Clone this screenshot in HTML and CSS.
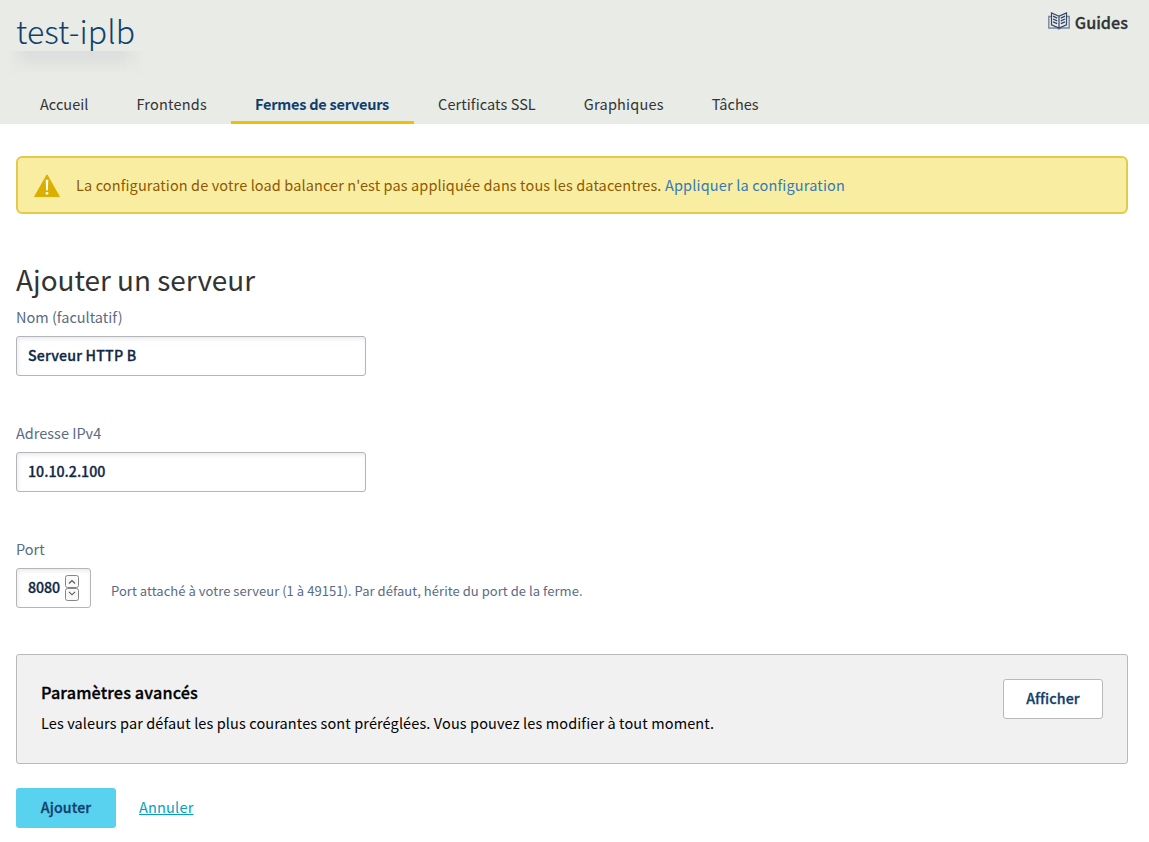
FILE: index.html
```html
<!DOCTYPE html>
<html lang="fr">
<head>
<meta charset="utf-8">
<title>test-iplb</title>
<link rel="stylesheet" href="styles.css">
</head>
<body>
<header class="header">
  <div class="header-top">
    <h1 class="title">test-iplb</h1>
    <a class="guides">
      <svg class="guides-icon" width="22" height="18" viewBox="0 0 22 18" fill="none" stroke="#33456b">
        <path d="M3 4.500H.8v11.500h8.400l1 .9h1.600l1-.9h8.400V4.500H19" stroke="#7886a0" stroke-width="1.400"/>
        <path d="M11 4.200 3.500 1v11.800L11 16l7.500-3.200V1L11 4.200V16" stroke-width="1.200"/>
        <path d="m5 4.200 4.200 1.900M5 7l4.200 1.900M5 9.800l4.200 1.900M17 4.200l-4.200 1.900M17 7l-4.200 1.900M17 9.800l-4.200 1.900" stroke-width="1.300"/>
      </svg>
      <span class="guides-label">Guides</span>
    </a>
  </div>
  <nav class="tabs">
    <a class="tab">Accueil</a>
    <a class="tab tab-wide">Frontends</a>
    <a class="tab tab-active">Fermes de serveurs</a>
    <a class="tab tab-ssl">Certificats SSL</a>
    <a class="tab tab-wide">Graphiques</a>
    <a class="tab">Tâches</a>
  </nav>
</header>
<main class="content">
  <div class="alert">
    <svg class="alert-icon" width="26" height="24" viewBox="0 0 26 24">
      <path d="M13 .8 25.400 22.600H.6Z" fill="#dbaf00" stroke="#dbaf00" stroke-width="1" stroke-linejoin="round"/>
      <path d="M11.700 5.800h2.600l-.5 10.600h-1.600Z" fill="#fff"/>
      <circle cx="13" cy="19.300" r="1.400" fill="#fff"/>
    </svg>
    <p class="alert-text">La configuration de votre load balancer n'est pas appliquée dans tous les datacentres. <a class="alert-link">Appliquer la configuration</a></p>
  </div>
  <h2 class="heading">Ajouter un serveur</h2>
  <div class="field">
    <label class="label">Nom (facultatif)</label>
    <div class="input">Serveur HTTP B</div>
  </div>
  <div class="field">
    <label class="label">Adresse IPv4</label>
    <div class="input input-ip">10.10.2.100</div>
  </div>
  <div class="field">
    <label class="label">Port</label>
    <div class="port-row">
      <div class="input input-port">8080
        <svg class="spinner" width="14" height="27" viewBox="0 0 14 27" fill="none">
          <rect x=".5" y=".5" width="13" height="12" rx="2" fill="#f9f9f9" stroke="#858585"/>
          <rect x=".5" y="13.500" width="13" height="12" rx="2" fill="#f9f9f9" stroke="#858585"/>
          <path d="m4 8.500 3-3 3 3M4 16.800l3 3 3-3" stroke="#555" stroke-width="1.100"/>
        </svg>
      </div>
      <span class="hint">Port attaché à votre serveur (1 à 49151). Par défaut, hérite du port de la ferme.</span>
    </div>
  </div>
  <section class="panel">
    <div>
      <h3 class="panel-title">Paramètres avancés</h3>
      <p class="panel-text">Les valeurs par défaut les plus courantes sont préréglées. Vous pouvez les modifier à tout moment.</p>
    </div>
    <button class="button button-outline">Afficher</button>
  </section>
  <div class="actions">
    <button class="button button-primary">Ajouter</button>
    <a class="cancel">Annuler</a>
  </div>
</main>
</body>
</html>
```
FILE: styles.css
```css
* { box-sizing: border-box; }
body, h1, h2, h3, p { margin: 0; }
body {
  background: #fff;
  color: #333;
  font-family: "Noto Sans CJK SC", "Noto Sans CJK JP", sans-serif;
  font-size: 14.500px;
  line-height: 24px;
  white-space: nowrap;
}
.header { height: 124px; background: #e8ebe6; }
.header-top { display: flex; justify-content: space-between; height: 85px; padding: 10px 21px 0 16px; }
.title { width: 119px; height: 42px; font-size: 32px; font-weight: 300; line-height: 40px; letter-spacing: .1px; color: #113f6d; }
.title::after {
  content: "";
  display: block;
  height: 23px;
  margin: 1px -8px 0;
  background: linear-gradient(#dbdedd, #dfe2df 40%, #e8ebe6);
  -webkit-mask-image: linear-gradient(90deg, transparent, #000 20px, #000 112px, transparent);
  mask-image: linear-gradient(90deg, transparent, #000 20px, #000 112px, transparent);
}
.guides { display: flex; gap: 5px; height: 24px; align-items: center; font-size: 16.200px; font-weight: 500; color: #333; -webkit-text-stroke: .3px; }
.guides-icon { margin-top: -3px; }
.tabs { display: flex; height: 39px; padding-left: 16px; }
.tab { display: block; padding: 7px 24px 0; letter-spacing: .03px; }
.tab-wide { letter-spacing: .22px; }
.tab-ssl { letter-spacing: .08px; }
.tab-active { width: 183px; border-bottom: 3px solid #efc100; color: #113f6d; font-weight: 700; letter-spacing: -.24px; }
.content { padding: 32px 21px 0 16px; }
.alert {
  display: flex;
  align-items: center;
  gap: 16px;
  height: 58px;
  padding: 0 16px;
  border: 2px solid #e2cb4b;
  border-radius: 6px;
  background: #f9eda1;
  color: #8f5902;
}
.alert-icon { margin-top: 1px; }
.alert-text { letter-spacing: .115px; }
.alert-link { color: #337ab7; letter-spacing: .17px; }
.heading { margin-top: 46px; height: 42px; font-size: 27.900px; line-height: 38px; font-weight: 400; }
.field { height: 92px; margin-bottom: 24px; padding-top: 3px; }
.label { display: block; height: 31px; color: #5a6b84; }
.input {
  display: flex;
  align-items: center;
  width: 350px;
  height: 40px;
  padding: 0 11px 2px;
  border: 1px solid #b5b5b8;
  border-radius: 3px;
  box-shadow: inset 1px 2px 4px #e7eaef;
  color: #122844;
  font-size: 14.200px;
  letter-spacing: .17px;
  font-weight: 500;
  -webkit-text-stroke: .3px;
}
.input-ip { letter-spacing: 0; }
.port-row { display: flex; align-items: center; gap: 20px; }
.input-port { width: 75px; gap: 5px; letter-spacing: -.1px; }
.spinner { margin-top: 3px; }
.hint { padding-top: 6px; font-size: 13px; letter-spacing: .045px; color: #5a6b84; }
.panel {
  display: flex;
  justify-content: space-between;
  height: 110px;
  margin-top: 28px;
  padding: 24px;
  border: 1px solid #b9b9b9;
  border-radius: 3px;
  background: #f1f1f1;
  color: #000;
}
.panel-title { font-size: 16.200px; font-weight: 500; line-height: 26px; letter-spacing: .15px; -webkit-text-stroke: .3px; }
.panel-text { margin-top: 6px; letter-spacing: .11px; }
.button {
  width: 100px;
  height: 40px;
  padding: 0 0 2px;
  border: 0;
  border-radius: 3px;
  font: inherit;
  font-size: 14.200px;
  letter-spacing: .12px;
  font-weight: 500;
  color: #113f6d;
  -webkit-text-stroke: .3px;
}
.button-outline { border: 1px solid #b9b9b9; background: #fff; }
.button-primary { background: #59d2ef; }
.actions { display: flex; align-items: center; gap: 23px; margin-top: 24px; }
.cancel { margin-top: -2px; letter-spacing: .2px; color: #00a2bf; text-decoration: underline; }
```
